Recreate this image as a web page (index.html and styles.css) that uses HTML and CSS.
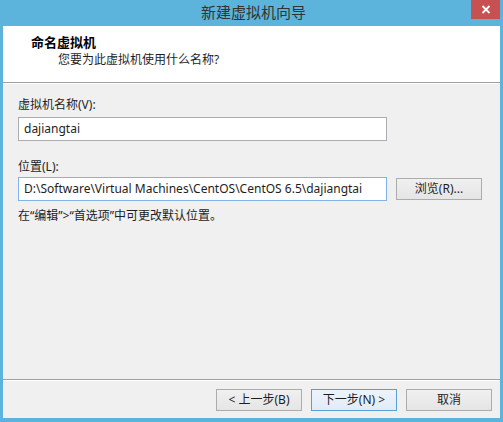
FILE: index.html
```html
<!DOCTYPE html>
<html lang="zh-CN">
<head>
<meta charset="utf-8">
<title>新建虚拟机向导</title>
<link rel="stylesheet" href="styles.css">
</head>
<body>
<div class="window">
  <div class="titlebar">
    <span class="spacer"></span>
    <span class="title">新建虚拟机向导</span>
    <span class="close" aria-label="关闭">
      <svg width="10" height="9" viewBox="0 0 10 9"><path d="M1.5 1 L8.5 8 M8.5 1 L1.5 8" stroke="#fff" stroke-width="1.8" fill="none"/></svg>
    </span>
  </div>
  <div class="frame">
    <div class="header">
      <div class="h-title">命名虚拟机</div>
      <div class="h-sub">您要为此虚拟机使用什么名称?</div>
    </div>
    <div class="content">
      <div class="label">虚拟机名称(V):</div>
      <div class="input name-input">dajiangtai</div>
      <div class="label loc-label">位置(L):</div>
      <div class="row">
        <div class="input focus">D:\Software\Virtual Machines\CentOS\CentOS 6.5\dajiangtai</div>
        <button class="btn browse">浏览(R)...</button>
      </div>
      <div class="hint">在“编辑”&gt;“首选项”中可更改默认位置。</div>
    </div>
    <div class="footer">
      <button class="btn">&lt; 上一步(B)</button>
      <button class="btn default">下一步(N) &gt;</button>
      <button class="btn">取消</button>
    </div>
  </div>
</div>
</body>
</html>
```

FILE: styles.css
```css
* { box-sizing: border-box; }
html, body { margin: 0; padding: 0; }
body {
  font-family: "Noto Sans", "Noto Sans CJK SC", sans-serif;
  font-size: 12px;
  color: #1e1e1e;
}
.window {
  width: 503px;
  height: 422px;
  background: #5cb4dc;
  display: flex;
  flex-direction: column;
}
.titlebar {
  height: 26px;
  display: grid;
  grid-template-columns: 1fr auto 1fr;
  align-items: start;
}
.title {
  font-family: "Noto Sans CJK SC", sans-serif;
  font-size: 15px;
  line-height: 24px;
  color: #333;
  padding-left: 4px;
}
.close {
  justify-self: end;
  width: 29px;
  height: 19px;
  margin-right: 3px;
  background: #c75050;
  display: flex;
  align-items: center;
  justify-content: center;
}
.frame {
  flex: 1;
  margin: 0 3px 4px 3px;
  background: #f0f0f0;
  display: flex;
  flex-direction: column;
}
.header {
  height: 57px;
  background: #fff;
  border-bottom: 1px solid #a0a0a0;
  padding: 8px 0 0 28px;
}
.h-title {
  font-weight: bold;
  font-size: 13px;
  line-height: 16px;
  color: #000;
}
.h-sub {
  margin-top: 2px;
  padding-left: 27px;
  line-height: 16px;
  color: #1e1e1e;
}
.content {
  flex: 1;
  border-top: 1px solid #fff;
  padding: 13px 0 0 15px;
}
.label {
  line-height: 16px;
}
.loc-label { margin-top: 18px; }
.input {
  width: 369px;
  height: 24px;
  background: #fff;
  border: 1px solid #abadb3;
  padding: 0 5px;
  line-height: 22px;
  white-space: nowrap;
  overflow: hidden;
}
.name-input { margin-top: 4px; }
.input.focus { border-color: #7eb4ea; }
.row {
  margin-top: 2px;
  display: flex;
  align-items: center;
}
.btn {
  font: inherit;
  color: #1e1e1e;
  width: 86px;
  height: 22px;
  padding: 0;
  border: 1px solid #acacac;
  background: linear-gradient(#f0f0f0, #e5e5e5);
  line-height: 20px;
  text-align: center;
}
.browse { margin-left: 9px; }
.btn.default {
  border-color: #5a9fd4;
  background: linear-gradient(#ecf4fc, #e2ecf7);
}
.hint {
  margin-top: 7px;
  line-height: 16px;
}
.footer {
  height: 39px;
  border-top: 1px solid #a0a0a0;
  box-shadow: inset 0 1px 0 #fff;
  display: flex;
  justify-content: flex-end;
  gap: 9px;
  padding: 9px 8px 0 0;
}
```
